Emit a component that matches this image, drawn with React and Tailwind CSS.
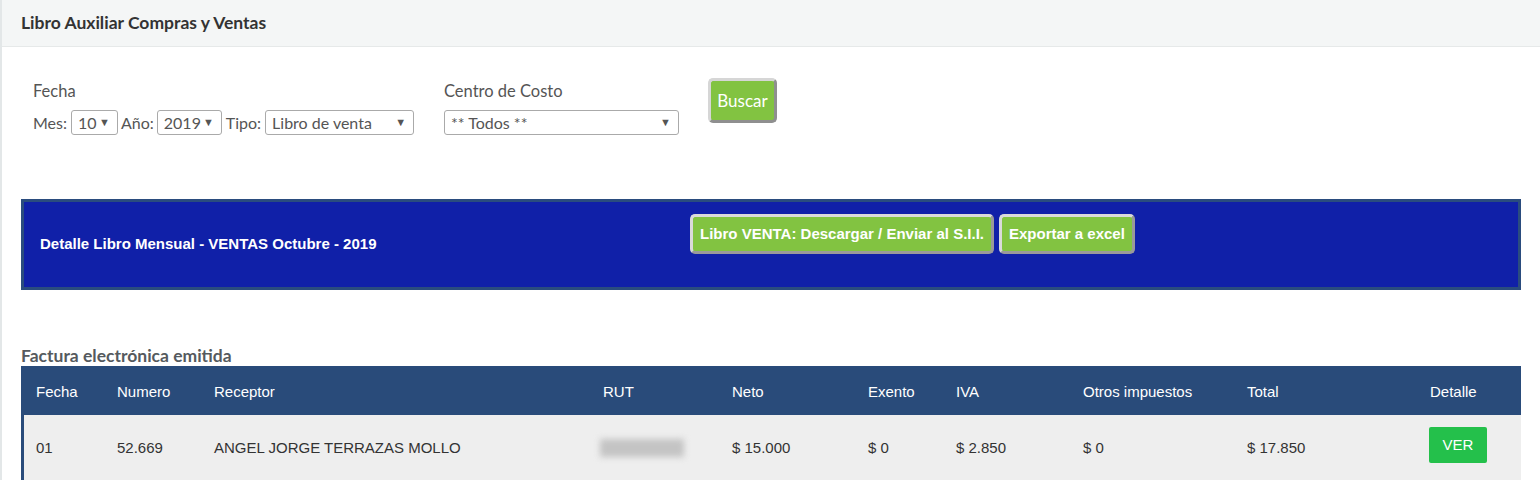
import React from 'react';

const headCols = 'grid grid-cols-[81px_97px_389px_129px_136px_88px_127px_164px_183px_105px]';
const rowCols = 'grid grid-cols-[78px_97px_389px_129px_136px_88px_127px_164px_183px_105px]';

function FakeSelect({ value, width }) {
  return (
    <div
      className={`flex h-[25px] items-center justify-between rounded-[3px] border border-[#aaaaaa] bg-white pl-[6px] pr-[7px] text-[16px] text-[#555555] ${width}`}
    >
      <span>{value}</span>
      <span className="text-[11px] text-[#555555]">▼</span>
    </div>
  );
}

function GreenButton({ children }) {
  return (
    <button className="h-[40px] rounded-[5px] border-[3px] border-[#dadada] border-r-[#9a9a9a] border-b-[#9a9a9a] bg-[#82c341] px-[7px] text-[15px] font-bold text-white">
      {children}
    </button>
  );
}

export default function App() {
  const headers = ['Fecha', 'Numero', 'Receptor', 'RUT', 'Neto', 'Exento', 'IVA', 'Otros impuestos', 'Total', 'Detalle'];

  return (
    <div className="min-h-screen border-l-2 border-[#e3e7e8] bg-white font-['Lato','Liberation_Sans',sans-serif]">
      <div className="flex h-[47px] items-center border-b border-[#e6e9e9] bg-[#f4f6f6] px-[19px]">
        <h1 className="text-[17.5px] font-bold text-[#333333]">Libro Auxiliar Compras y Ventas</h1>
      </div>

      <div className="px-[19px]">
        {/* filtros */}
        <div className="flex items-start pt-[32px]">
          <div className="ml-[12px] w-[411px]">
            <div className="h-[24px] text-[16.5px] leading-[24px] text-[#555555]">Fecha</div>
            <div className="mt-[7px] flex items-center text-[16px] text-[#555555]">
              <span className="mr-[4px]">Mes:</span>
              <FakeSelect value="10" width="w-[47px]" />
              <span className="ml-[3px] mr-[3px]">Año:</span>
              <FakeSelect value="2019" width="w-[65px]" />
              <span className="ml-[4px] mr-[4px]">Tipo:</span>
              <FakeSelect value="Libro de venta" width="w-[149px]" />
            </div>
          </div>
          <div className="w-[264px]">
            <div className="h-[24px] text-[16.5px] leading-[24px] text-[#555555]">Centro de Costo</div>
            <div className="mt-[7px]">
              <FakeSelect value="** Todos **" width="w-[235px]" />
            </div>
          </div>
          <button className="h-[45px] w-[69px] -translate-y-[1px] rounded-[5px] border-[3px] border-[#d6d6d6] border-r-[#8f8f8f] border-b-[#8f8f8f] bg-[#82c341] text-[17px] text-white">
            Buscar
          </button>
        </div>

        {/* panel azul */}
        <div className="mt-[64px] flex h-[91px] w-[1500px] border-[3px] border-[#2a4c7e] bg-[#1020a8]">
          <div className="flex w-[666px] items-center pl-[16px] font-['Liberation_Sans',Arial,sans-serif] text-[15px] font-bold text-white">
            Detalle Libro Mensual - VENTAS Octubre - 2019
          </div>
          <div className="flex gap-[5px] pt-[12px] font-['Liberation_Sans',Arial,sans-serif]">
            <GreenButton>Libro VENTA: Descargar / Enviar al S.I.I.</GreenButton>
            <GreenButton>Exportar a excel</GreenButton>
          </div>
        </div>

        {/* tabla */}
        <div className="mt-[55px] text-[17.5px] font-bold leading-[21px] text-[#555a5e]">Factura electrónica emitida</div>
        <div className="w-[1500px] font-['Liberation_Sans',Arial,sans-serif] text-[15px]">
          <div className={`${headCols} h-[49px] items-center bg-[#294b7a] pt-[3px] text-white`}>
            {headers.map((h) => (
              <div key={h} className="pl-[15px]">{h}</div>
            ))}
          </div>
          <div className={`${rowCols} h-[66px] items-center border-l-[3px] border-[#294b7a] bg-[#eeeeee] text-[#333333]`}>
            <div className="pl-[12px]">01</div>
            <div className="pl-[15px]">52.669</div>
            <div className="pl-[15px]">ANGEL JORGE TERRAZAS MOLLO</div>
            <div className="pl-[12px]">
              <div className="h-[18px] w-[84px] bg-[#c4c4c4] blur-[3px]" />
            </div>
            <div className="pl-[15px]">$ 15.000</div>
            <div className="pl-[15px]">$ 0</div>
            <div className="pl-[15px]">$ 2.850</div>
            <div className="pl-[15px]">$ 0</div>
            <div className="pl-[15px]">$ 17.850</div>
            <div className="pl-[14px]">
              <button className="-mt-[6px] h-[36px] w-[58px] rounded-[2px] bg-[#24c04b] text-[15px] text-white">VER</button>
            </div>
          </div>
        </div>
      </div>
    </div>
  );
}
